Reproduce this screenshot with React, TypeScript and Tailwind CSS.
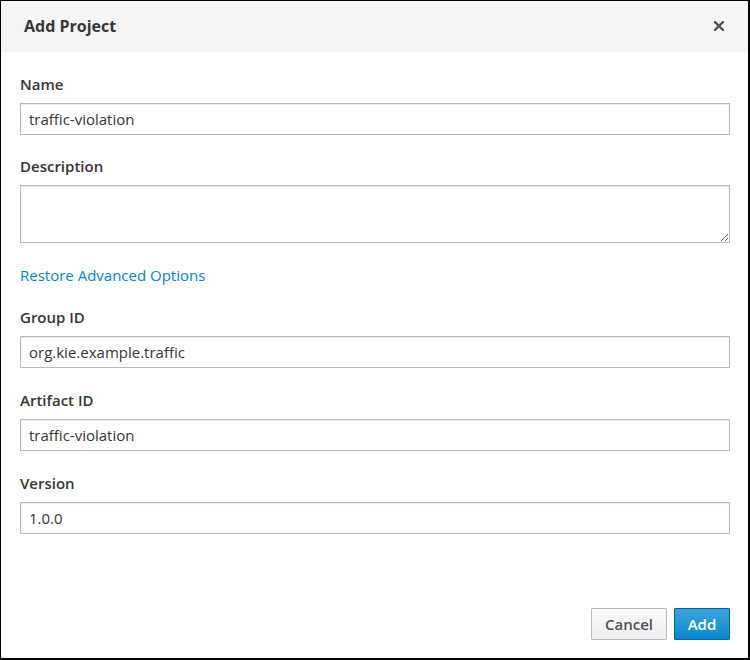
import React from "react";

const Field = ({ label, value }: { label: string; value: string }) => (
  <div className="flex flex-col">
    <label className="text-[15px] leading-[20px] font-semibold text-[#363636] mb-[9px]">{label}</label>
    <input
      readOnly
      value={value}
      className="h-[32px] w-full border border-[#bbbbbb] px-[8px] text-[15px] text-[#363636] outline-none shadow-[inset_0_1px_1px_rgba(3,3,3,0.075)]"
    />
  </div>
);

export default function App() {
  return (
    <div
      className="w-[750px] h-[660px] bg-white border-black border-l border-t border-r-2 border-b-2 flex flex-col"
      style={{ fontFamily: '"Open Sans", "Liberation Sans", sans-serif' }}
    >
      <div className="h-[51px] bg-[#f5f5f5] flex items-center justify-between pl-[23px] pr-[24px] shrink-0">
        <h1 className="text-[16px] leading-[20px] font-bold text-[#363636] -mt-[2px]">Add Project</h1>
        <svg width="10" height="10" viewBox="0 0 10 10" className="text-[#4d5258] -mt-[2px]">
          <path d="M1 1 L9 9 M9 1 L1 9" stroke="currentColor" strokeWidth="2.4" strokeLinecap="square" />
        </svg>
      </div>
      <div className="flex-1 flex flex-col pl-[19px] pr-[18px] pt-[22px]">
        <Field label="Name" value="traffic-violation" />
        <div className="flex flex-col mt-[21px]">
          <label className="text-[15px] leading-[20px] font-semibold text-[#363636] mb-[9px]">Description</label>
          <textarea
            readOnly
            className="h-[58px] w-full border border-[#bbbbbb] px-[8px] text-[15px] outline-none shadow-[inset_0_1px_1px_rgba(3,3,3,0.075)] block"
          />
        </div>
        <a className="mt-[22px] text-[15px] leading-[20px] text-[#0088ce] self-start">Restore Advanced Options</a>
        <div className="mt-[22px] flex flex-col gap-[22px]">
          <Field label="Group ID" value="org.kie.example.traffic" />
          <Field label="Artifact ID" value="traffic-violation" />
          <Field label="Version" value="1.0.0" />
        </div>
        <div className="flex-1" />
        <div className="flex justify-end gap-[7px] pb-[18px]">
          <button className="h-[32px] w-[76px] border border-[#bbbbbb] bg-gradient-to-b from-[#fafafa] to-[#ededed] text-[15px] font-semibold text-[#4d5258] rounded-[1px]">
            Cancel
          </button>
          <button className="h-[32px] w-[56px] border border-[#00659c] bg-gradient-to-b from-[#39a5dc] to-[#0088ce] text-[15px] font-semibold text-white rounded-[1px]">
            Add
          </button>
        </div>
      </div>
    </div>
  );
}
